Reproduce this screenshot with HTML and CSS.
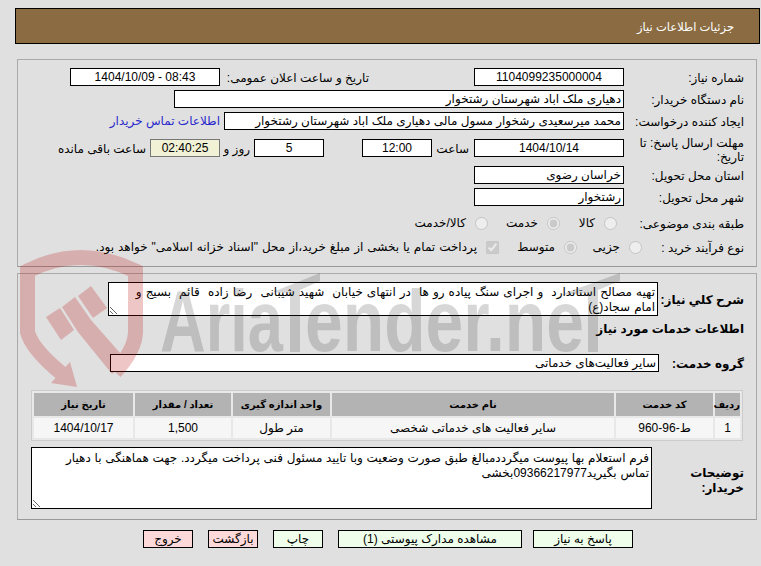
FILE: index.html
```html
<!DOCTYPE html>
<html lang="fa">
<head>
<meta charset="utf-8">
<title>جزئیات اطلاعات نیاز</title>
<link rel="stylesheet" href="styles.css">
</head>
<body>
<div class="page" dir="rtl">
  <header class="title-bar"><span>جزئیات اطلاعات نیاز</span></header>

  <section class="panel panel-top">
    <div class="row">
      <label class="lbl">شماره نیاز:</label>
      <div class="field w150 center">1104099235000004</div>
      <label class="lbl-pub">تاریخ و ساعت اعلان عمومی:</label>
      <div class="field w150 center">08:43 - 1404/10/09</div>
    </div>
    <div class="row">
      <label class="lbl">نام دستگاه خریدار:</label>
      <div class="field w450">دهیاری ملک اباد شهرستان رشتخوار</div>
    </div>
    <div class="row">
      <label class="lbl">ایجاد کننده درخواست:</label>
      <div class="field w400">محمد میرسعیدی رشخوار مسول مالی دهیاری ملک اباد شهرستان رشتخوار</div>
      <a class="contact" href="#">اطلاعات تماس خریدار</a>
    </div>
    <div class="row row-deadline">
      <label class="lbl">مهلت ارسال پاسخ: تا تاریخ:</label>
      <div class="field w150 center">1404/10/14</div>
      <span class="txt t-hour">ساعت</span>
      <div class="field w70 center">12:00</div>
      <div class="field w70 center days">5</div>
      <span class="txt t-day">روز و</span>
      <div class="field w70 center clock">02:40:25</div>
      <span class="txt t-left">ساعت باقی مانده</span>
    </div>
    <div class="row">
      <label class="lbl">استان محل تحویل:</label>
      <div class="field w150">خراسان رضوی</div>
    </div>
    <div class="row">
      <label class="lbl">شهر محل تحویل:</label>
      <div class="field w150">رشتخوار</div>
    </div>
    <div class="row row-opt">
      <label class="lbl">طبقه بندی موضوعی:</label>
      <span class="opt o-kala"><input type="radio" name="c" disabled><span>کالا</span></span>
      <span class="opt o-khed"><input type="radio" name="c" disabled checked><span>خدمت</span></span>
      <span class="opt o-both"><input type="radio" name="c" disabled><span>کالا/خدمت</span></span>
    </div>
    <div class="row row-opt">
      <label class="lbl">نوع فرآیند خرید :</label>
      <span class="opt o-joz"><input type="radio" name="p" disabled><span>جزیی</span></span>
      <span class="opt o-mot"><input type="radio" name="p" disabled checked><span>متوسط</span></span>
      <span class="opt o-pay"><input type="checkbox" disabled checked><span>پرداخت تمام یا بخشی از مبلغ خرید،از محل "اسناد خزانه اسلامی" خواهد بود.</span></span>
    </div>
  </section>

  <section class="panel panel-bottom">
    <div class="row row-desc">
      <label class="lbl lbl-need bold">شرح کلي نیاز:</label>
      <textarea class="area area-need" readonly>تهیه مصالح استاندارد  و اجرای سنگ پیاده رو ها  در انتهای خیابان  شهید شیبانی  رضا زاده  قائم  بسیج و امام سجاد(ع)</textarea>
    </div>
    <h2 class="sub">اطلاعات خدمات مورد نیاز</h2>
    <div class="row row-group">
      <label class="lbl lbl-group bold">گروه خدمت:</label>
      <div class="field group">سایر فعالیت‌های خدماتی</div>
    </div>
    <div class="grid-wrap">
      <table class="grid">
        <thead>
          <tr><th class="c1">ردیف</th><th class="c2">کد خدمت</th><th class="c3">نام خدمت</th><th class="c4">واحد اندازه گیری</th><th class="c5">تعداد / مقدار</th><th class="c6">تاریخ نیاز</th></tr>
        </thead>
        <tbody>
          <tr><td>1</td><td>ط-96-960</td><td>سایر فعالیت های خدماتی شخصی</td><td>متر طول</td><td>1,500</td><td>1404/10/17</td></tr>
        </tbody>
      </table>
    </div>
    <div class="row row-buyer">
      <label class="lbl bold buyer">توضیحات خریدار:</label>
      <textarea class="area area-buyer" readonly>فرم استعلام بها پیوست میگرددمبالغ طبق صورت وضعیت وبا تایید مسئول فنی پرداخت میگردد. جهت هماهنگی با دهیار تماس بگیرید09366217977بخشی</textarea>
    </div>
  </section>

  <nav class="actions">
    <button class="btn green b-answer">پاسخ به نیاز</button>
    <button class="btn green b-docs">مشاهده مدارک پیوستی (1)</button>
    <button class="btn green b-small">چاپ</button>
    <button class="btn pink b-small">بازگشت</button>
    <button class="btn pink b-small">خروج</button>
  </nav>

  <svg class="watermark" viewBox="0 0 761 566" width="761" height="566" aria-hidden="true">
    <g class="wm-red">
      <path class="wm-stroke" d="M115 372 Q135 350 135.500 332 V271 Q80 244 27.500 271 V332 Q32 350 66 377"/>
      <path d="M70 362 L77 387 L51 383 Z"/>
      <path d="M46 317 L60 308 L74 330 L61 340 Z"/>
      <path d="M62 307 L75 297 L91 320 L128 362 L112 374 L78 332 Z"/>
      <path d="M78 296 L91 286 L107 308 L93 318 Z"/>
    </g>
    <g class="wm-grey">
      <path d="M273 292 L320 273 L320 281 L300 290 V352 H290 V293 Z"/>
      <path d="M560 295 L620 273 L620 281 L598 290 V352 H588 V293 Z"/>
      <text class="wm-text" x="160" y="351" textLength="123" lengthAdjust="spacingAndGlyphs">Aria</text>
      <text class="wm-text" x="305" y="351" textLength="279" lengthAdjust="spacingAndGlyphs">ender.ne</text>
    </g>
  </svg>
</div>
</body>
</html>
```
FILE: styles.css
```css
* { box-sizing: border-box; }
html, body { margin: 0; padding: 0; }
body {
  background: #e0e0e0;
  color: #000;
  font: 12px/15px "Liberation Sans", "DejaVu Sans", sans-serif;
  width: 761px;
  height: 566px;
  overflow: hidden;
}
.page { position: relative; width: 761px; height: 566px; padding-top: 8px; }
.watermark { position: absolute; left: 0; top: 0; z-index: 2; pointer-events: none; direction: ltr; }
.wm-red { fill: #bb0000; opacity: .22; }
.wm-stroke { fill: none; stroke: #bb0000; stroke-width: 15; }
.wm-grey { fill: #282828; opacity: .18; }
.wm-text { font: bold 88px "Liberation Sans", sans-serif; }
.title-bar {
  margin: 0 1px 0 0;
  width: 745px;
  height: 36px;
  background: #8b6c42;
  border: 1px solid #000;
  color: #fff;
  font-size: 11.5px;
  display: flex;
  align-items: center;
  padding: 2px 25px 0 0;
}
.panel {
  margin-right: 4px;
  width: 740px;
  border: 1px solid #aaa;
  border-bottom-color: #999;
}
.panel-top { margin-top: 15px; height: 208px; padding-top: 8px; }
.panel-bottom { margin-top: 6px; height: 247px; padding-top: 8px; }

.row { display: flex; align-items: center; height: 18px; margin-bottom: 4px; }
.lbl { width: 132px; flex: none; padding: 2px 12px 0 0; }
.lbl-need { width: 98px; }
.lbl-group { width: 97px; }
.bold { font-weight: bold; }
.field {
  height: 18px;
  background: #fff;
  border: 1px solid #000;
  padding: 1px 2px 0;
  line-height: 15px;
  white-space: nowrap;
  overflow: hidden;
  flex: none;
}
.center { text-align: center; }
.w150 { width: 150px; }
.w450 { width: 450px; }
.w400 { width: 400px; }
.w70 { width: 70px; }
.lbl-pub { margin-right: 105px; width: 149px; flex: none; padding-top: 2px; }
.contact { color: #2a2acc; text-decoration: none; margin-right: 4px; padding-top: 1px; white-space: nowrap; }

.row-deadline { height: 27px; margin: 9px 0 0; align-items: flex-start; }
.row-deadline .lbl { padding: 0 12px 0 4px; margin-top: -3px; line-height: 14px; }
.txt { white-space: nowrap; flex: none; line-height: 18px; padding-top: 1px; }
.t-hour { width: 42px; padding-right: 5px; }
.days { margin-right: 38px; }
.t-day { width: 34px; padding-right: 4px; }
.clock { background: #f1f1d5; border-color: #777; }
.t-left { padding-right: 4px; }

.row-opt { height: 20px; }
.row-opt:nth-child(7) { margin-top: 7px; }
.opt { display: inline-flex; align-items: center; flex: none; white-space: nowrap; }
.opt input { margin: 0; width: 13px; height: 13px; flex: none; }
.opt span { margin-right: 9px; }
.o-kala { width: 57px; margin-right: 7px; }
.o-khed { width: 72px; }
.o-joz { width: 65px; margin-right: -18px; }
.o-mot { width: 78px; }
.o-pay { word-spacing: .6px; }

.row-desc { height: 34px; margin-bottom: 6px; }
.area {
  display: block;
  background: #fff;
  border: 1px solid #000;
  border-radius: 0;
  padding: 2px 2px 0 20px;
  margin: 0;
  font: inherit;
  line-height: 15px;
  color: #000;
  outline: none;
  overflow: hidden;
  flex: none;
}
.area-need { width: 550px; height: 34px; word-spacing: .7px; }
.sub { margin: 0 12px 0 0; font: bold 12px/15px "Liberation Sans", "DejaVu Sans", sans-serif; height: 15px; }
.row-group { margin-top: 17px; margin-bottom: 18px; }
.group { width: 549px; }
.grid-wrap { margin-right: 13px; width: 712px; }
.grid {
  width: 712px;
  table-layout: fixed;
  border-collapse: separate;
  border-spacing: 2px;
  border: 1px solid #ccc;
  background: #e8e8e8;
}
.grid th {
  background: #b3b3b3;
  height: 23px;
  padding: 0;
  font-size: 10px;
  font-weight: bold;
}
.grid td {
  background: #f6f6f6;
  height: 20px;
  padding: 1px 0 0;
  text-align: center;
}
.c1 { width: 25px; } .c2 { width: 97px; } .c3 { width: 282px; }
.c4 { width: 97px; } .c5 { width: 96px; } .c6 { width: 99px; }
.row-buyer { height: 62px; margin-top: 6px; margin-bottom: 0; }
.buyer { width: 104px; padding-left: 40px; margin-top: 4px; }
.area-buyer { width: 621px; height: 62px; padding: 3px 2px 0 16px; word-spacing: .4px; }

.actions {
  display: flex;
  gap: 15px;
  margin-top: 10px;
  padding-right: 128px;
}
.btn {
  height: 18px;
  border: 1px solid #000;
  border-radius: 0;
  padding: 1px 0 0;
  font: inherit;
  color: #000;
  line-height: 15px;
}
.green { background: #eefeea; }
.pink { background: #fdd9d9; }
.b-answer { width: 100px; }
.b-docs { width: 184px; margin-right: -4px; }
.b-small { width: 50px; }
```
